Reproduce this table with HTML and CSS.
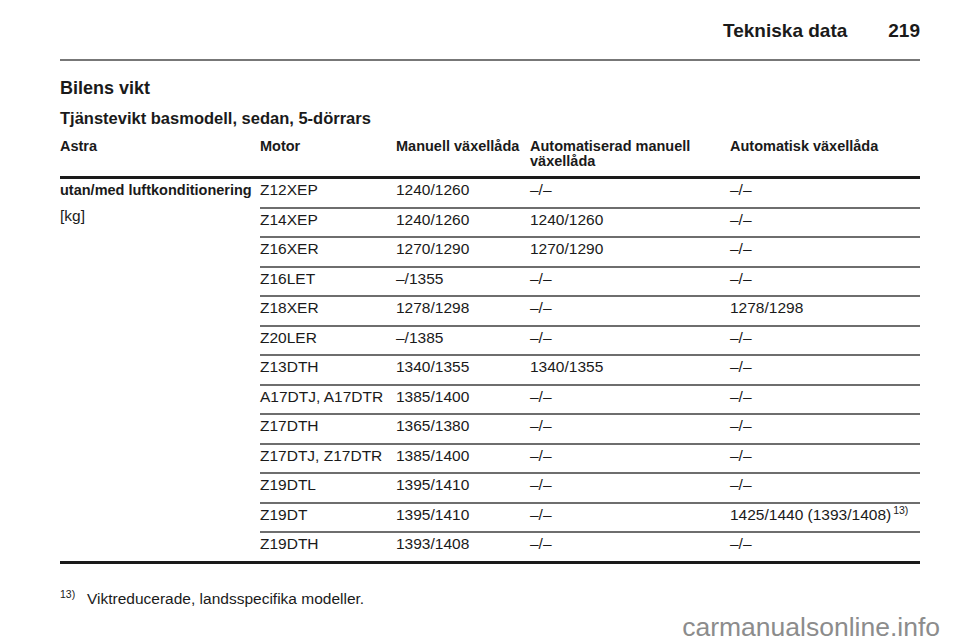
FILE: index.html
```html
<!DOCTYPE html>
<html lang="sv">
<head>
<meta charset="utf-8">
<title>Tekniska data 219</title>
<link rel="stylesheet" href="styles.css">
</head>
<body>
<div class="page">
  <header class="running-head">
    <span class="section">Tekniska data</span>
    <span class="pageno">219</span>
  </header>

  <h1 class="title">Bilens vikt</h1>
  <h2 class="subtitle">Tjänstevikt basmodell, sedan, 5-dörrars</h2>

  <div class="table">
    <div class="thead">
      <div class="th">Astra</div>
      <div class="th">Motor</div>
      <div class="th">Manuell växellåda</div>
      <div class="th">Automatiserad manuell<br>växellåda</div>
      <div class="th">Automatisk växellåda</div>
    </div>
    <div class="tbody">
      <div class="rowhead">
        <div class="rh-main">utan/med luftkonditionering</div>
        <div class="rh-unit">[kg]</div>
      </div>
      <div class="rows">
        <div class="row"><span>Z12XEP</span><span>1240/1260</span><span>–/–</span><span>–/–</span></div>
        <div class="row"><span>Z14XEP</span><span>1240/1260</span><span>1240/1260</span><span>–/–</span></div>
        <div class="row"><span>Z16XER</span><span>1270/1290</span><span>1270/1290</span><span>–/–</span></div>
        <div class="row"><span>Z16LET</span><span>–/1355</span><span>–/–</span><span>–/–</span></div>
        <div class="row"><span>Z18XER</span><span>1278/1298</span><span>–/–</span><span>1278/1298</span></div>
        <div class="row"><span>Z20LER</span><span>–/1385</span><span>–/–</span><span>–/–</span></div>
        <div class="row"><span>Z13DTH</span><span>1340/1355</span><span>1340/1355</span><span>–/–</span></div>
        <div class="row"><span>A17DTJ, A17DTR</span><span>1385/1400</span><span>–/–</span><span>–/–</span></div>
        <div class="row"><span>Z17DTH</span><span>1365/1380</span><span>–/–</span><span>–/–</span></div>
        <div class="row"><span>Z17DTJ, Z17DTR</span><span>1385/1400</span><span>–/–</span><span>–/–</span></div>
        <div class="row"><span>Z19DTL</span><span>1395/1410</span><span>–/–</span><span>–/–</span></div>
        <div class="row"><span>Z19DT</span><span>1395/1410</span><span>–/–</span><span>1425/1440 (1393/1408)<sup class="fn">13)</sup></span></div>
        <div class="row"><span>Z19DTH</span><span>1393/1408</span><span>–/–</span><span>–/–</span></div>
      </div>
    </div>
  </div>

  <p class="footnote"><sup class="fn-mark">13)</sup><span class="fn-text">Viktreducerade, landsspecifika modeller.</span></p>
</div>
<div class="watermark">carmanualsonline.info</div>
</body>
</html>
```

FILE: styles.css
```css
html, body {
  margin: 0;
  padding: 0;
  background: #ffffff;
}

body {
  font-family: "Liberation Sans", Arial, sans-serif;
  color: #1a1a1a;
  width: 960px;
  height: 642px;
  overflow: hidden;
  position: relative;
}

.page {
  padding: 0 40px 0 60px;
}

.running-head {
  display: flex;
  justify-content: flex-end;
  align-items: baseline;
  gap: 41px;
  padding-top: 19px;
  padding-bottom: 16px;
  line-height: 24px;
  font-size: 19px;
  font-weight: bold;
  border-bottom: 2px solid #777777;
}

.title {
  margin: 15px 0 0 0;
  font-size: 18px;
  line-height: 24px;
  font-weight: bold;
}

.subtitle {
  margin: 7px 0 0 0;
  font-size: 16.5px;
  line-height: 22px;
  font-weight: bold;
}

.table {
  margin-top: 10px;
  border-bottom: 3px solid #1a1a1a;
}

.thead {
  display: grid;
  grid-template-columns: 200px 136px 134px 200px 190px;
  font-size: 14.5px;
  line-height: 15px;
  font-weight: bold;
  padding-bottom: 7px;
  border-bottom: 3px solid #1a1a1a;
}

.tbody {
  display: flex;
}

.rowhead {
  width: 200px;
  flex: none;
  font-size: 14.5px;
  line-height: 22px;
}

.rh-main {
  font-weight: bold;
  white-space: nowrap;
}

.rh-unit {
  margin-top: 4px;
  font-size: 15.5px;
}

.rows {
  flex: 1;
}

.row {
  display: grid;
  grid-template-columns: 136px 134px 200px 190px;
  height: 27.5px;
  line-height: 22px;
  font-size: 15.5px;
  border-bottom: 2px solid #6e6e6e;
}

.row:last-child {
  border-bottom: none;
}

.row span {
  white-space: nowrap;
}

.fn {
  font-size: 10.5px;
  vertical-align: 6px;
  line-height: 0;
  margin-left: 2px;
}

.footnote {
  margin: 24px 0 0 0;
  font-size: 15.5px;
  line-height: 22px;
}

.fn-mark {
  display: inline-block;
  font-size: 10.5px;
  vertical-align: 6px;
  line-height: 10px;
  width: 27px;
}

.watermark {
  position: absolute;
  right: 20px;
  top: 612px;
  font-size: 26.5px;
  line-height: 30px;
  color: #8c8c8c;
  font-family: "Liberation Sans", Arial, sans-serif;
}
```
